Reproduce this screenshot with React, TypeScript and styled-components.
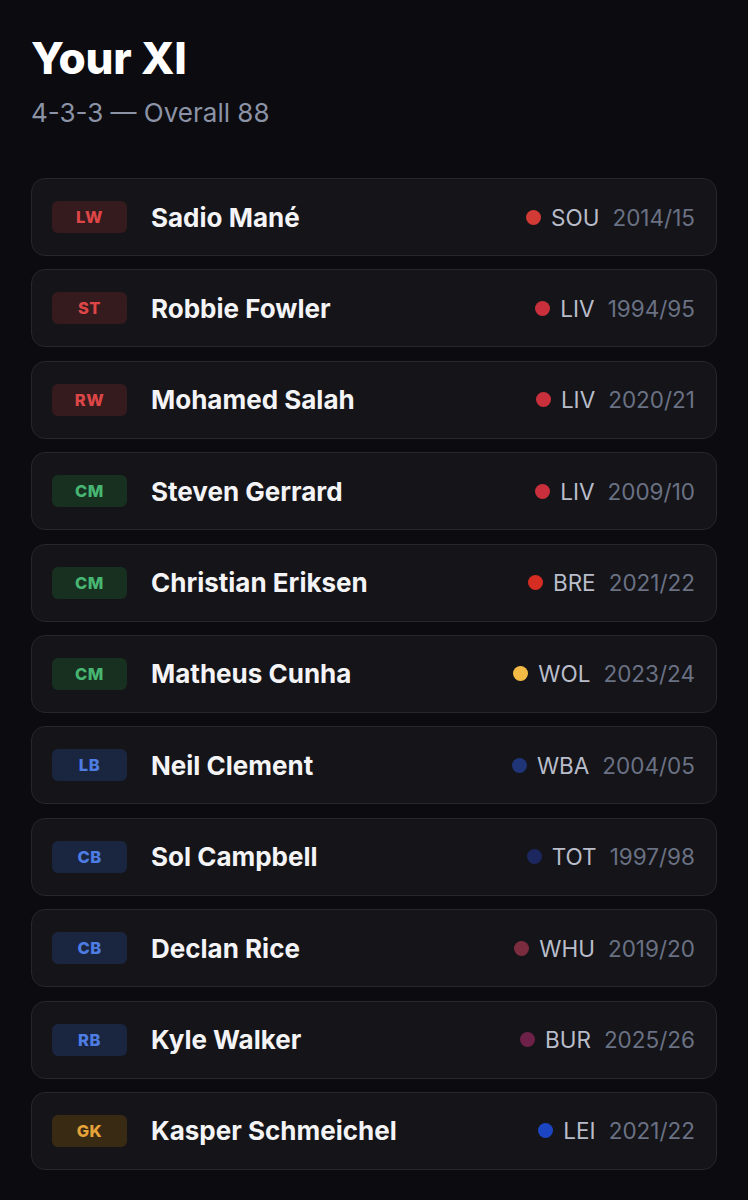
import React from "react";
import styled, { createGlobalStyle } from "styled-components";

const Global = createGlobalStyle`
  html, body { margin: 0; padding: 0; background: #0b0b10; }
  body { font-family: Inter, "Noto Sans", "Liberation Sans", sans-serif; -webkit-font-smoothing: antialiased; }
`;

type Role = "att" | "mid" | "def" | "gk";

const roleColors: Record<Role, { bg: string; fg: string }> = {
  att: { bg: "#351b1e", fg: "#dd4646" },
  mid: { bg: "#17301f", fg: "#47b673" },
  def: { bg: "#1a2540", fg: "#4d7de3" },
  gk: { bg: "#392a14", fg: "#e6a33a" },
};

const Page = styled.main`
  padding: 32px 31px 30px 31px;
  min-height: 1200px;
  box-sizing: border-box;
`;

const Title = styled.h1`
  margin: 0;
  font-size: 44px;
  font-weight: 800;
  color: #ffffff;
  letter-spacing: -0.2px;
  line-height: 52px;
`;

const Subtitle = styled.p`
  margin: 12px 0 0 0;
  font-size: 26px;
  font-weight: 400;
  color: #8c93a6;
  line-height: 34px;
`;

const List = styled.ul`
  list-style: none;
  margin: 48px 0 0 0;
  padding: 0;
  display: flex;
  flex-direction: column;
  gap: 13.4px;
`;

const Card = styled.li`
  height: 78px;
  box-sizing: border-box;
  display: flex;
  align-items: center;
  padding: 0 21px 0 20px;
  background: #141419;
  border: 1.5px solid #26262d;
  border-radius: 14px;
`;

const Badge = styled.span<{ $role: Role }>`
  width: 75px;
  height: 32px;
  border-radius: 6px;
  display: flex;
  align-items: center;
  justify-content: center;
  background: ${(p) => roleColors[p.$role].bg};
  color: ${(p) => roleColors[p.$role].fg};
  font-size: 16.5px;
  font-weight: 800;
  letter-spacing: 0.5px;
  flex-shrink: 0;
`;

const Name = styled.span`
  margin-left: 24px;
  flex: 1;
  font-size: 26px;
  font-weight: 650;
  color: #f4f4f6;
`;

const Meta = styled.span`
  display: flex;
  align-items: center;
  font-size: 22.5px;
`;

const Dot = styled.span<{ $color: string }>`
  width: 15px;
  height: 15px;
  border-radius: 50%;
  background: ${(p) => p.$color};
  margin-right: 10px;
`;

const Team = styled.span`
  color: #b9bdca;
  margin-right: 13px;
`;

const Season = styled.span`
  color: #6a7183;
`;

const players: { pos: string; role: Role; name: string; team: string; color: string; season: string }[] = [
  { pos: "LW", role: "att", name: "Sadio Mané", team: "SOU", color: "#d23a35", season: "2014/15" },
  { pos: "ST", role: "att", name: "Robbie Fowler", team: "LIV", color: "#c9303c", season: "1994/95" },
  { pos: "RW", role: "att", name: "Mohamed Salah", team: "LIV", color: "#c9303c", season: "2020/21" },
  { pos: "CM", role: "mid", name: "Steven Gerrard", team: "LIV", color: "#c9303c", season: "2009/10" },
  { pos: "CM", role: "mid", name: "Christian Eriksen", team: "BRE", color: "#d52d22", season: "2021/22" },
  { pos: "CM", role: "mid", name: "Matheus Cunha", team: "WOL", color: "#f3bb45", season: "2023/24" },
  { pos: "LB", role: "def", name: "Neil Clement", team: "WBA", color: "#1f3578", season: "2004/05" },
  { pos: "CB", role: "def", name: "Sol Campbell", team: "TOT", color: "#1c2760", season: "1997/98" },
  { pos: "CB", role: "def", name: "Declan Rice", team: "WHU", color: "#7b2c3e", season: "2019/20" },
  { pos: "RB", role: "def", name: "Kyle Walker", team: "BUR", color: "#6e2148", season: "2025/26" },
  { pos: "GK", role: "gk", name: "Kasper Schmeichel", team: "LEI", color: "#1c45c4", season: "2021/22" },
];

export default function App() {
  return (
    <>
      <Global />
      <Page>
        <Title>Your XI</Title>
        <Subtitle>4-3-3 — Overall 88</Subtitle>
        <List>
          {players.map((p, i) => (
            <Card key={i}>
              <Badge $role={p.role}>{p.pos}</Badge>
              <Name>{p.name}</Name>
              <Meta>
                <Dot $color={p.color} />
                <Team>{p.team}</Team>
                <Season>{p.season}</Season>
              </Meta>
            </Card>
          ))}
        </List>
      </Page>
    </>
  );
}
